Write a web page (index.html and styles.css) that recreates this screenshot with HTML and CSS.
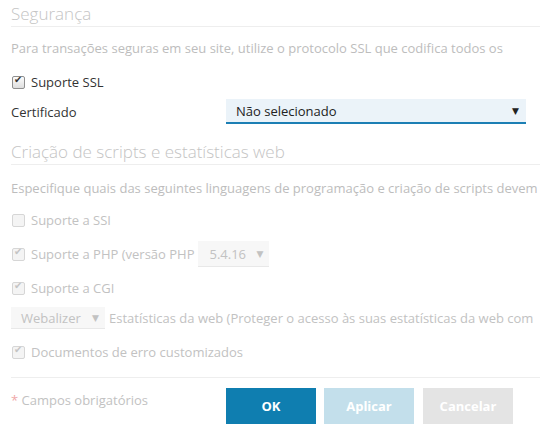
FILE: index.html
```html
<html lang="pt">
<head>
    <meta charset="UTF-8">
    <meta name="viewport" content="width=device-width, initial-scale=1.0">
    <title>Hospedagem</title>
    <link rel="stylesheet" href="styles.css">
</head>
<body>
    <div class="form">
        <h2 class="section-title">Segurança</h2>
        <p class="hint">Para transações seguras em seu site, utilize o protocolo SSL que codifica todos os</p>

        <label class="check-row">
            <span class="check checked"></span>
            <span>Suporte SSL</span>
        </label>

        <div class="field-row">
            <span class="field-label">Certificado</span>
            <div class="select select-main">
                <span>Não selecionado</span>
                <span class="arrow">▼</span>
            </div>
        </div>

        <h2 class="section-title second">Criação de scripts e estatísticas web</h2>
        <p class="hint hint-second">Especifique quais das seguintes linguagens de programação e criação de scripts devem</p>

        <label class="check-row disabled row-ssi">
            <span class="check"></span>
            <span>Suporte a SSI</span>
        </label>

        <div class="check-row disabled row-php">
            <span class="check checked"></span>
            <span>Suporte a PHP (versão PHP</span>
            <div class="select select-off select-php">
                <span>5.4.16</span>
                <span class="arrow">▼</span>
            </div>
        </div>

        <label class="check-row disabled row-cgi">
            <span class="check checked"></span>
            <span>Suporte a CGI</span>
        </label>

        <div class="check-row disabled row-stats">
            <div class="select select-off select-stats">
                <span>Webalizer</span>
                <span class="arrow">▼</span>
            </div>
            <span>Estatísticas da web (Proteger o acesso às suas estatísticas da web com</span>
        </div>

        <label class="check-row disabled row-docs">
            <span class="check checked"></span>
            <span>Documentos de erro customizados</span>
        </label>

        <div class="footer">
            <span class="required"><span class="star">*</span> Campos obrigatórios</span>
            <div class="buttons">
                <button class="btn btn-ok">OK</button>
                <button class="btn btn-apply">Aplicar</button>
                <button class="btn btn-cancel">Cancelar</button>
            </div>
        </div>
    </div>
</body>
</html>
```

FILE: styles.css
```css
body {
    margin: 0;
    padding: 0 0 0 11px;
    font-family: "Open Sans", "DejaVu Sans", sans-serif;
    font-size: 13px;
    color: #333;
    background: #fff;
    overflow: hidden;
    white-space: nowrap;
}
.form {
    width: 529px;
}
.section-title {
    margin: 2px 0 0;
    font-size: 17px;
    font-weight: 300;
    line-height: 24px;
    color: #c4c4c4;
    border-bottom: 1px solid #eee;
}
.section-title.second {
    margin-top: 16px;
}
.hint {
    margin: 11px 0 0;
    line-height: 20px;
    color: #bdbdbd;
}
.hint-second {
    margin-top: 13px;
}
.check-row {
    display: flex;
    align-items: center;
    height: 20px;
    margin-top: 14px;
}
.check {
    box-sizing: border-box;
    width: 13px;
    height: 13px;
    margin: 0 6px 0 1px;
    border: 1px solid #8f8f8f;
    border-radius: 2px;
    background: linear-gradient(#fcfcfc, #dedede);
    position: relative;
    flex: none;
}
.check.checked::after {
    content: "✔";
    position: absolute;
    left: 1px;
    top: -3px;
    font-size: 10px;
    color: #333;
    font-family: "DejaVu Sans", sans-serif;
}
.disabled {
    color: #c2c2c2;
}
.disabled .check {
    border-color: #d6d6d6;
    background: #f4f4f4;
}
.disabled .check.checked::after {
    color: #c4c4c4;
}
.row-ssi { margin-top: 12px; }
.row-php { margin-top: 11px; height: 26px; }
.row-cgi { margin-top: 11px; }
.row-stats { margin-top: 9px; height: 22px; }
.row-docs { margin-top: 13px; }

.field-row {
    display: flex;
    align-items: center;
    margin-top: 7px;
}
.field-label {
    width: 215px;
}
.select {
    box-sizing: border-box;
    display: flex;
    flex: none;
    align-items: center;
    justify-content: space-between;
}
.arrow {
    font-size: 9px;
    font-family: "DejaVu Sans", sans-serif;
}
.select-main {
    width: 300px;
    height: 25px;
    padding: 0 7px 0 10px;
    background: #ebf3f9;
    border-bottom: 2px solid #1c7fb4;
    color: #222;
}
.select-main .arrow {
    color: #222;
}
.select-off {
    background: #f7f7f7;
    border-bottom: 1px solid #e8e8e8;
    color: #c2c2c2;
}
.select-php {
    width: 71px;
    height: 26px;
    margin-left: 4px;
    padding: 0 6px 0 11px;
}
.select-stats {
    width: 94px;
    height: 22px;
    margin-right: 4px;
    padding: 0 6px 0 10px;
}
.footer {
    display: flex;
    margin-top: 15px;
    padding-top: 10px;
    border-top: 1px solid #eee;
}
.required {
    width: 215px;
    padding-top: 3px;
    color: #c2c2c2;
}
.star {
    color: #f0a8a8;
}
.buttons {
    display: flex;
}
.btn {
    width: 90px;
    height: 36px;
    margin-right: 8px;
    border: none;
    font-family: "Open Sans", "DejaVu Sans", sans-serif;
    font-size: 13px;
    font-weight: bold;
    color: #fff;
}
.btn-ok {
    background: #0f7eb0;
}
.btn-apply {
    background: #c3dfeb;
    margin-right: 9px;
}
.btn-cancel {
    background: #e4e4e4;
}
```
